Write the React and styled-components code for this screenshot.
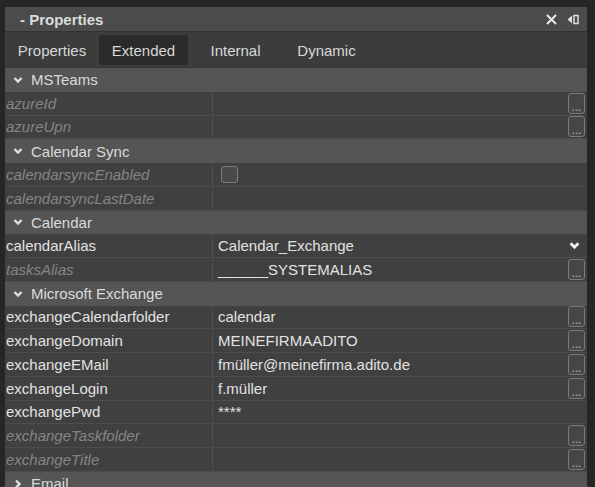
import styled, { createGlobalStyle } from 'styled-components'

const Global = createGlobalStyle`
  html, body {
    margin: 0;
    padding: 0;
    background: #262626;
  }
  body {
    font-family: "Liberation Sans", Arial, sans-serif;
    width: 595px;
    height: 487px;
    overflow: hidden;
  }
`

const Frame = styled.div`
  padding: 7px 8px 0 5px;
  height: 487px;
  box-sizing: border-box;
  overflow: hidden;
`

const Panel = styled.div`
  background: #3f3f3f;
  display: flex;
  flex-direction: column;
  width: 582px;
`

const TitleBar = styled.div`
  height: 24px;
  background: #4b4b4b;
  border-bottom: 1px solid #333;
  display: flex;
  align-items: center;
  padding: 0 8px 0 15px;
  color: #dcdcdc;
  font-weight: bold;
  font-size: 15px;
`

const Title = styled.div`
  flex: 1;
`

const TitleIcons = styled.div`
  display: flex;
  align-items: center;
  gap: 10px;
`

const TabBar = styled.div`
  height: 35px;
  background: #3c3c3c;
  display: flex;
  align-items: center;
  border-bottom: 1px solid #363636;
`

const Tab = styled.div`
  width: ${(p) => p.$w}px;
  height: 30px;
  margin-top: 1px;
  display: flex;
  align-items: center;
  justify-content: center;
  font-size: 15px;
  color: #d8d8d8;
  border-radius: 3px;
  background: ${(p) => (p.$active ? '#2a2a2a' : 'transparent')};
`

const SectionRow = styled.div`
  height: 23.76px;
  box-sizing: border-box;
  background: #555555;
  display: flex;
  align-items: center;
  gap: 8px;
  padding-left: 8px;
  color: #dadada;
  font-size: 15px;
`

const Row = styled.div`
  height: 23.76px;
  box-sizing: border-box;
  display: grid;
  grid-template-columns: 208px 1fr;
  border-bottom: 1px solid #4c4c4c;
  background: #404040;
`

const Name = styled.div`
  display: flex;
  align-items: center;
  padding-left: 1px;
  border-right: 1px solid #4e4e4e;
  font-size: 15px;
  font-style: ${(p) => (p.$muted ? 'italic' : 'normal')};
  color: ${(p) => (p.$muted ? '#858585' : '#e2e2e2')};
  white-space: nowrap;
  overflow: hidden;
`

const Value = styled.div`
  display: flex;
  align-items: center;
  padding: 0 2px 0 5px;
  font-size: 15px;
  color: #e2e2e2;
  white-space: nowrap;
`

const ValueText = styled.div`
  flex: 1;
`

const DotsButton = styled.div`
  width: 15px;
  height: 18px;
  border: 1.5px solid #7a7a7a;
  border-radius: 3px;
  background: #464646;
  display: flex;
  align-items: flex-end;
  justify-content: center;
  padding-bottom: 1px;
  box-sizing: content-box;
`

const Checkbox = styled.div`
  width: 15px;
  height: 15px;
  margin-left: 3px;
  border: 1.5px solid #7d7d7d;
  border-radius: 3px;
  background: #4a4a4a;
`

const SelectArrow = styled.span`
  display: flex;
  margin-right: 5px;
`

const Dots = () => (
  <svg width="11" height="4" viewBox="0 0 11 4">
    <rect x="1.5" y="1.5" width="1.6" height="1.6" fill="#9e9e9e" />
    <rect x="4.7" y="1.5" width="1.6" height="1.6" fill="#9e9e9e" />
    <rect x="7.9" y="1.5" width="1.6" height="1.6" fill="#9e9e9e" />
  </svg>
)

const Chevron = ({ open = true, size = 10, color = '#e0e0e0', stroke = 2.4 }) => (
  <svg width={size} height={size} viewBox="0 0 10 10">
    {open ? (
      <path d="M1.5 3 L5 6.5 L8.5 3" fill="none" stroke={color} strokeWidth={stroke} />
    ) : (
      <path d="M3 1.5 L6.5 5 L3 8.5" fill="none" stroke={color} strokeWidth={stroke} />
    )}
  </svg>
)

const CloseIcon = () => (
  <svg width="11" height="11" viewBox="0 0 11 11">
    <path d="M1 1 L10 10 M10 1 L1 10" stroke="#eaeaea" strokeWidth="2" />
  </svg>
)

const PinIcon = () => (
  <svg width="12" height="11" viewBox="0 0 12 11">
    <path d="M0.5 5.5 L5 1.5 L5 9.5 Z" fill="#e0e0e0" />
    <rect x="7" y="1.5" width="4" height="8" fill="none" stroke="#e0e0e0" strokeWidth="1.5" />
  </svg>
)

const tabs = [
  { label: 'Properties', w: 94 },
  { label: 'Extended', w: 89, active: true },
  { label: 'Internal', w: 95 },
  { label: 'Dynamic', w: 87 },
]

const sections = [
  {
    title: 'MSTeams',
    rows: [
      { name: 'azureId', muted: true, dots: true },
      { name: 'azureUpn', muted: true, dots: true },
    ],
  },
  {
    title: 'Calendar Sync',
    rows: [
      { name: 'calendarsyncEnabled', muted: true, check: true },
      { name: 'calendarsyncLastDate', muted: true },
    ],
  },
  {
    title: 'Calendar',
    rows: [
      { name: 'calendarAlias', value: 'Calendar_Exchange', select: true },
      { name: 'tasksAlias', muted: true, value: '______SYSTEMALIAS', dots: true },
    ],
  },
  {
    title: 'Microsoft Exchange',
    rows: [
      { name: 'exchangeCalendarfolder', value: 'calendar', dots: true },
      { name: 'exchangeDomain', value: 'MEINEFIRMAADITO', dots: true },
      { name: 'exchangeEMail', value: 'fmüller@meinefirma.adito.de', dots: true },
      { name: 'exchangeLogin', value: 'f.müller', dots: true },
      { name: 'exchangePwd', value: '****' },
      { name: 'exchangeTaskfolder', muted: true, dots: true },
      { name: 'exchangeTitle', muted: true, dots: true },
    ],
  },
  { title: 'Email', closed: true, rows: [] },
]

const PropertyRow = ({ row }) => (
  <Row>
    <Name $muted={row.muted}>{row.name}</Name>
    <Value>
      {row.check ? <Checkbox /> : <ValueText>{row.value}</ValueText>}
      {row.dots && (
        <DotsButton>
          <Dots />
        </DotsButton>
      )}
      {row.select && (
        <SelectArrow>
          <Chevron size={11} color="#f0f0f0" stroke={2.6} />
        </SelectArrow>
      )}
    </Value>
  </Row>
)

export default function App() {
  return (
    <>
      <Global />
      <Frame>
        <Panel>
          <TitleBar>
            <Title>- Properties</Title>
            <TitleIcons>
              <CloseIcon />
              <PinIcon />
            </TitleIcons>
          </TitleBar>
          <TabBar>
            {tabs.map((t) => (
              <Tab key={t.label} $w={t.w} $active={t.active}>
                {t.label}
              </Tab>
            ))}
          </TabBar>
          {sections.map((s) => (
            <div key={s.title}>
              <SectionRow>
                <Chevron open={!s.closed} />
                {s.title}
              </SectionRow>
              {s.rows.map((r) => (
                <PropertyRow key={r.name} row={r} />
              ))}
            </div>
          ))}
        </Panel>
      </Frame>
    </>
  )
}
